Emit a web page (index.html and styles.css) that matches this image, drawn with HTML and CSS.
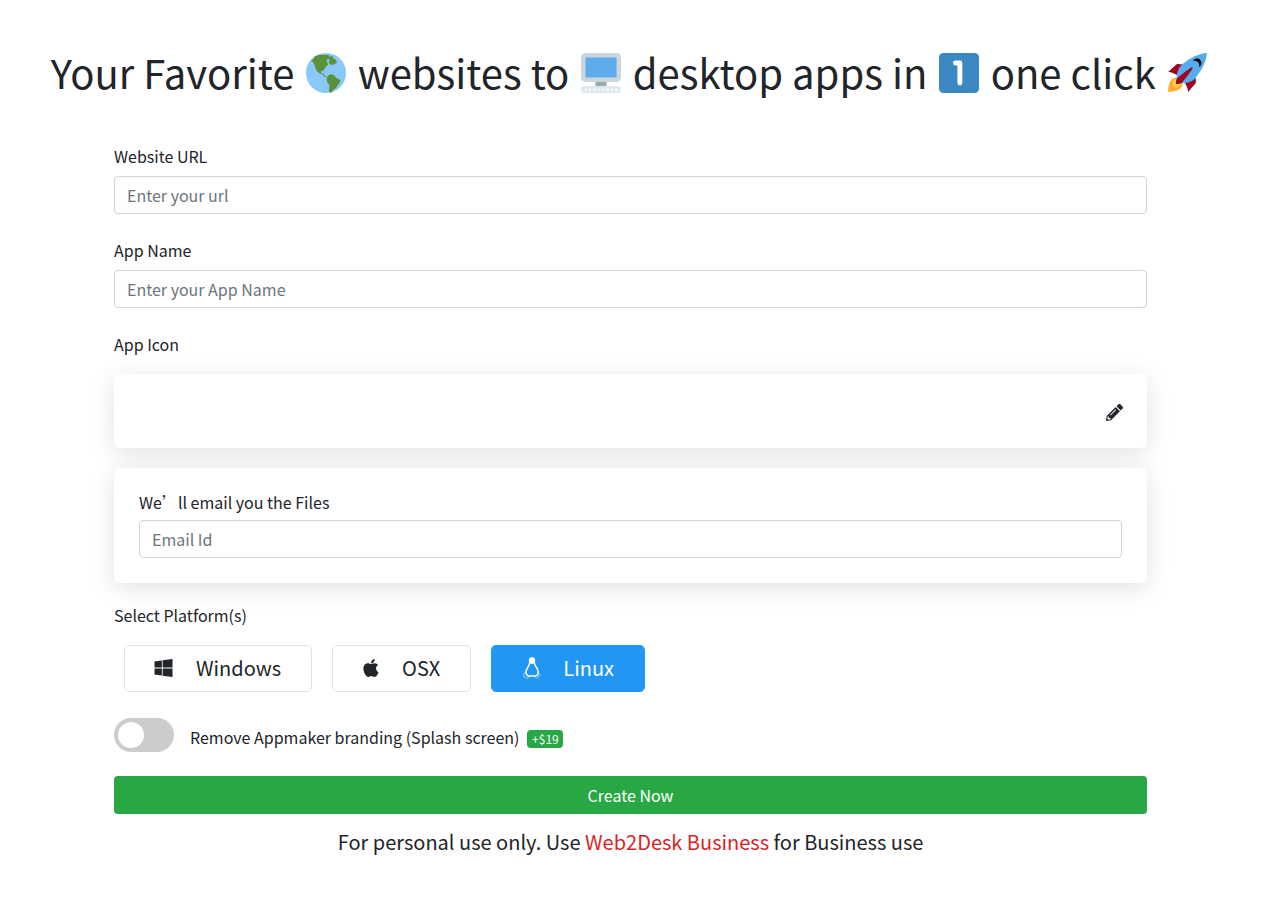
FILE: index.html
```html
<!DOCTYPE html>
<html lang="en">
<head>
<meta charset="utf-8">
<title>Appmaker</title>
<link rel="stylesheet" href="styles.css">
</head>
<body>
<main class="page">
  <h1 class="title">Your Favorite <svg class="emoji" viewBox="0 0 36 36"><circle cx="18" cy="18" r="18" fill="#88c9f9"/><path fill="#5c913b" d="M4.200 7L6.500 5.600 8 3l4.600-1.500L20 1.800l1.500 1.600 2.200-.7.700 2 1.600.600 1.600 2-.1 2.200-2.600.200-.500 1-2.400-.2-1.200-1-.4-1.600 1.200-1.600-1.500-1.200-1.900 1.700 1 1.500.7 2.200-1.800 1.600-1.400 2.300-1 .6.200 1.700-1.300-1-1.500 1.200 1.300 1.700 1.300-.4.100 1.300 1.300.5.700 1.600 1.300.2-.4.400-2.200-.9-1.600-1.800-3.600-1.700-2.200-2.600L7.500 10.500 6.300 8z"/><path fill="#5c913b" d="M19.400 20.600l2.600-1.400 3 .6 1.600 1.800 1.600 1.400 2.800 1.200-.8 2.800-2 2.600-1.600 2.200-2.500 2-.7 1.500-2 .2-.8-2 .6-4.800-2.200-2.600-.4-2.500z"/></svg> websites to <svg class="emoji" viewBox="0 0 36 36"><path fill="#ccd6dd" d="M36 22a4 4 0 0 1-4 4H4a4 4 0 0 1-4-4V4a4 4 0 0 1 4-4h28a4 4 0 0 1 4 4v18z"/><path fill="#5dadec" d="M4 4h28v18H4z"/><path fill="#9aaab4" d="M13 26h10v4H13z"/><rect y="30" width="36" height="6" rx="3" fill="#e1e8ed"/><path d="M4 33h29" fill="none" stroke="#f5f8fa" stroke-width="2.500" stroke-linecap="round" stroke-dasharray="0 4"/></svg> desktop apps in <svg class="emoji" viewBox="0 0 36 36"><rect width="36" height="36" rx="4" fill="#3b88c3"/><path fill="none" stroke="#fff" stroke-width="4.400" stroke-linecap="round" stroke-linejoin="round" d="M14.800 9h4v18"/></svg> one click <svg class="emoji" viewBox="0 0 36 36"><path fill="#a0041e" d="M1 17l8-7 16 1 1 16-7 8s0-6-6-12-12-6-12-6z"/><path fill="#ffac33" d="M1 35s0-8 3-11 11-2.800 11-2.800S15 29 12 32 1 35 1 35z"/><circle fill="#ffcc4d" cx="9" cy="27" r="4"/><path fill="#55acee" d="M36 0S26 0 14 10c-6 5-6 14-4 16s11 2 16-4C36 10 36 0 36 0z"/><path d="M27 5c-1.623 0-3.013.971-3.641 2.360.502-.227 1.055-.36 1.641-.36 2.209 0 4 1.791 4 4 0 .586-.133 1.139-.359 1.640C30.030 12.013 31 10.623 31 9c0-2.209-1.791-4-4-4z"/><path fill="#a0041e" d="M8 28s0-4 1-5 13-11 14-10-9 13-10 14-5 1-5 1z"/></svg></h1>
  <form class="form">
    <div class="group">
      <label class="label" for="url">Website URL</label>
      <input class="field" id="url" placeholder="Enter your url">
    </div>
    <div class="group">
      <label class="label" for="name">App Name</label>
      <input class="field" id="name" placeholder="Enter your App Name">
    </div>
    <div class="label">App Icon</div>
    <div class="card icon-card">
      <svg class="pencil" viewBox="0 0 512 512" fill="currentColor"><path d="M497.900 142.100l-46.100 46.100c-4.700 4.700-12.300 4.700-17 0l-111-111c-4.700-4.700-4.700-12.300 0-17l46.100-46.100c18.700-18.700 49.100-18.700 67.900 0l60.100 60.100c18.800 18.700 18.800 49.100 0 67.900zM284.200 99.800L21.600 362.400.4 483.900c-2.900 16.400 11.400 30.600 27.800 27.800l121.500-21.300 262.600-262.600c4.700-4.700 4.700-12.300 0-17l-111-111c-4.800-4.700-12.400-4.700-17.100 0zM124.100 339.900c-5.500-5.500-5.500-14.300 0-19.800l154-154c5.500-5.500 14.300-5.500 19.800 0s5.500 14.300 0 19.800l-154 154c-5.500 5.500-14.300 5.500-19.800 0zM88 424h48v36.300l-64.500 11.300-31.100-31.100L51.700 376H88v48z"/></svg>
    </div>
    <div class="card email-card">
      <label class="label" for="email">We’ll email you the Files</label>
      <input class="field" id="email" placeholder="Email Id">
    </div>
    <div class="label">Select Platform(s)</div>
    <div class="platforms">
      <div class="platform"><svg class="os windows" viewBox="0 32 448 448" fill="currentColor"><path d="M0 93.700l183.600-25.300v177.400H0V93.700zm0 324.600l183.600 25.300V268.400H0v149.900zm203.800 28L448 480V268.400H203.800v177.900zm0-380.600v180.100H448V32L203.800 65.700z"/></svg>Windows</div>
      <div class="platform"><svg class="os apple" viewBox="4 32 377 448" fill="currentColor"><path d="M318.700 268.700c-.2-36.700 16.400-64.400 50-84.800-18.800-26.900-47.200-41.700-84.700-44.600-35.500-2.800-74.300 20.700-88.500 20.700-15 0-49.400-19.700-76.400-19.700C63.300 141.200 4 184.800 4 273.500q0 39.300 14.400 81.200c12.800 36.700 59 126.700 107.200 125.200 25.200-.6 43-17.900 75.800-17.900 31.800 0 48.300 17.900 76.400 17.900 48.600-.7 90.400-82.500 102.600-119.300-65.200-30.700-61.700-90-61.700-91.900zm-56.600-164.200c27.300-32.400 24.800-61.900 24-72.500-24.100 1.400-52 16.400-67.900 34.900-17.500 19.800-27.800 44.300-25.600 71.900 26.100 2 49.900-11.400 69.500-34.300z"/></svg>OSX</div>
      <div class="platform selected"><svg class="os linux" viewBox="0 0 18 22" fill="none" stroke="currentColor"><path stroke-width="1.500" d="M6.600 6.500V3.500a2.400 2.400 0 0 1 4.800 0v3c.3 2 3.800 5 3.800 8.500 0 2.500-1.500 4-3.500 4H6.300c-2 0-3.300-1.500-3.300-4 0-3.500 3.300-6 3.600-8.500z"/><path fill="currentColor" stroke="none" d="M6.200 3C6.500 1 7.700.5 9 .5s2.800 1 2.800 3v4.500l-1.300-1.500-1.500.5-1.500-.5-1.300 1.500z"/><path stroke-width=".5" d="M3 15.500l-2.500 1 .3 3.500 4.200 1.400 1.800-1.800M14.800 15.500l2.600 2-.4 1.200-3.500 2.700-2-1.500"/></svg>Linux</div>
    </div>
    <div class="branding">
      <span class="switch"><span class="knob"></span></span>
      <span class="brand-text">Remove Appmaker branding (Splash screen)</span>
      <span class="badge">+$19</span>
    </div>
    <button class="create" type="button">Create Now</button>
    <p class="note">For personal use only. Use <a class="link">Web2Desk Business</a> for Business use</p>
  </form>
</main>
</body>
</html>
```
FILE: styles.css
```css
* { box-sizing: border-box; }
body {
  margin: 0;
  background: #fff;
  color: #212529;
  font: 400 16px/24px "Noto Sans CJK SC", sans-serif;
}
.page { width: 1261px; padding-top: 48px; }
.title {
  margin: 0;
  text-align: center;
  white-space: nowrap;
  font-size: 40px;
  line-height: 48px;
  font-weight: 400;
}
.emoji { width: 40px; height: 40px; vertical-align: -4px; margin: 0 2.75px; }
.form { width: 1033px; margin: 48px auto 0; }
.group { margin-bottom: 24px; }
.label { display: block; margin-bottom: 8px; }
.field {
  display: block;
  width: 100%;
  height: 38px;
  padding: 6px 12px;
  border: 1px solid #ced4da;
  border-radius: 4px;
  font: inherit;
  background: #fff;
}
.field::placeholder { color: #6c757d; opacity: 1; }
.card {
  border-radius: 5px;
  background: #fff;
  box-shadow: 0 5px 25px rgba(0, 0, 0, .12);
  padding: 25px;
}
.icon-card {
  display: flex;
  align-items: center;
  justify-content: flex-end;
  height: 74px;
  margin: 18px 0 20px;
  padding: 27px 24px 25px;
}
.pencil { width: 17px; height: 17px; }
.email-card { height: 115px; padding-top: 22px; margin-bottom: 20px; }
.email-card .label { margin-bottom: 6px; }
.platforms { display: flex; gap: 20px; margin: 18px 10px 26px; }
.platform {
  display: flex;
  align-items: center;
  height: 47px;
  padding: 0 30px 0 29px;
  border: 1px solid #dee2e6;
  border-radius: 5px;
  font-size: 20px;
  line-height: 30px;
  padding-bottom: 1px;
}
.selected { background: #2196f3; border-color: #2196f3; color: #fff; }
.os { height: 18px; margin-right: 23px; }
.windows { width: 19px; }
.apple { width: 16px; margin-left: 1px; }
.linux { width: 18px; height: 22px; margin: 0 22px 0 2px; }
.branding { display: flex; height: 34px; margin-bottom: 24px; }
.switch { width: 60px; height: 34px; padding: 4px; border-radius: 17px; background: #ccc; }
.knob { display: block; width: 26px; height: 26px; border-radius: 50%; background: #fff; }
.brand-text { margin: 7px 8px 0 16px; }
.badge {
  height: 18px;
  margin-top: 12px;
  padding: 0 4.600px;
  border-radius: 4px;
  background: #28a745;
  color: #fff;
  font-size: 12px;
  line-height: 18px;
}
.create {
  display: block;
  width: 100%;
  height: 38px;
  padding: 0;
  border: 0;
  border-radius: 4px;
  background: #28a745;
  color: #fff;
  font: inherit;
}
.note { margin: 13px 0 0; text-align: center; font-size: 20px; line-height: 30px; }
.link { color: #dc1f26; }
```
